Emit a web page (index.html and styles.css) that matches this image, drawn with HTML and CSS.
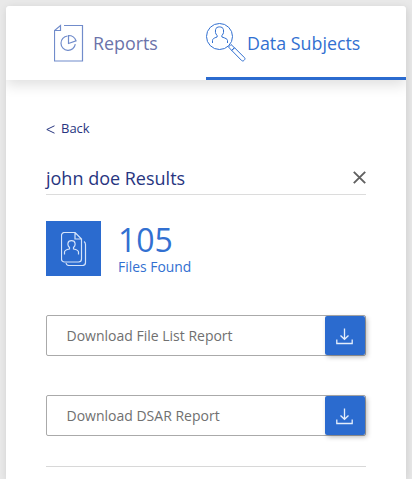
FILE: index.html
```html
<!DOCTYPE html>
<html lang="en">
<head>
<meta charset="utf-8">
<title>Data Subjects</title>
<link rel="stylesheet" href="styles.css">
</head>
<body>
<main class="card">
  <nav class="tabs">
    <a class="tab">
      <svg class="icon-report" width="30" height="38" viewBox="0 0 30 38"><path d="M10 1.500h18.500v35.500H.5V6.500L6.500 1.500v5H.5M13.500 12a7.200 7.200 0 1 0 7.800 8.200M14.500 11.500v8l7.500-2.700c-1-3-3.800-5.300-7.500-5.300z"/></svg>
      <span>Reports</span>
    </a>
    <a class="tab tab-active">
      <svg class="icon-search" width="41" height="41" viewBox="0 0 41 41"><circle cx="13.500" cy="13.500" r="13"/><path d="M6.500 20v-2.500c0-1.500 1-2.300 4.600-3.500v-1.500c-2-2-1.800-4-1.500-6 .4-3.500 7.400-3.500 7.800 0 .3 2 .5 4-1.500 6V14c3.600 1.200 5.600 2 5.600 3.500V20M22.500 24l2.500-2.500 3.500 3.300-2.700 2.700zM25.700 27.400l2.800-2.700 10 10c1 1 .2 2-.5 2.700-.8.800-1.700.7-2.500 0z"/></svg>
      <span>Data Subjects</span>
    </a>
  </nav>
  <section class="content">
    <a class="back"><svg width="9" height="9" viewBox="0 0 9 9"><path d="M8.500.8.8 4.500l7.700 3.700"/></svg><span>Back</span></a>
    <header class="heading">
      <h1>john doe Results</h1>
      <svg width="13" height="13" viewBox="0 0 13 13"><path d="m.8.800 11.400 11.400M12.200.8.8 12.200"/></svg>
    </header>
    <div class="summary">
      <div class="tile">
        <svg width="26" height="34" viewBox="0 0 26 34"><path d="M14 .5H3.500a3 3 0 0 0-3 3V27a3 3 0 0 0 3 3h14a3 3 0 0 0 3-3V7zM14 .5V7h6.500M5 31c.3 1.500 1.300 2.500 3 2.500h13.500a3 3 0 0 0 3-3V12.500c0-1.300-.5-2.300-1.500-3M3.500 22.500V20c0-1.500 1.300-2.300 5-3v-1.500c-2-2-1.800-3-1.500-4.200.4-3.500 6.600-3.500 7 0 .3 1.200.5 2.200-1.500 4.200V17c3.700.7 5 1.500 5 3v2.500"/></svg>
      </div>
      <div class="figures">
        <div class="count">105</div>
        <div class="label">Files Found</div>
      </div>
    </div>
    <div class="download">
      <span>Download File List Report</span>
      <button aria-label="Download"><svg width="17" height="17" viewBox="0 0 17 17"><path d="M8.500.5v10.800M4.500 7.500l4 3.800 4-3.800M.8 11.500v4h15.400v-4"/></svg></button>
    </div>
    <div class="download">
      <span>Download DSAR Report</span>
      <button aria-label="Download"><svg width="17" height="17" viewBox="0 0 17 17"><path d="M8.500.5v10.800M4.500 7.500l4 3.800 4-3.800M.8 11.500v4h15.400v-4"/></svg></button>
    </div>
    <hr>
  </section>
</main>
</body>
</html>
```
FILE: styles.css
```css
* { box-sizing: border-box; }
body {
  margin: 0;
  padding: 6px 6px 0;
  height: 479px;
  background: #e9e9e9;
  font-family: "Open Sans", sans-serif;
}
svg { display: block; fill: none; stroke: currentColor; flex: none; }
.card {
  height: 473px;
  background: #fff;
  border-radius: 3px 3px 0 0;
  box-shadow: 1px 2px 8px rgba(0, 0, 0, .12);
}
.tabs {
  display: flex;
  height: 74px;
  border-radius: 3px 3px 0 0;
  box-shadow: 0 5px 14px rgba(0, 0, 0, .13);
  clip-path: inset(0 0 -30px 0);
}
.tab {
  display: flex;
  align-items: center;
  width: 200px;
  padding-left: 48px;
  color: #6b73aa;
  font-size: 17.850px;
  line-height: 24px;
}
.tab span { margin-left: 9px; }
.tab-active {
  padding: 3px 0 0;
  border-bottom: 3px solid #2b6bcf;
  color: #3270d1;
}
.tab-active span { margin-left: 0; }
.icon-report { color: #718ccb; stroke-width: 1.2; }
.content { padding: 38px 40px 0; }
.back {
  display: flex;
  align-items: center;
  gap: 6px;
  height: 20px;
  color: #27357f;
  font-size: 13px;
  line-height: 20px;
}
.back svg { margin-top: 2px; }
.heading {
  display: flex;
  align-items: center;
  justify-content: space-between;
  height: 34px;
  margin-top: 23px;
  border-bottom: 1px solid #dcdcdc;
  color: #27357f;
}
.heading h1 { margin: 0; font-size: 18px; font-weight: 400; line-height: 24px; }
.heading svg { color: #606060; stroke-width: 1.9; }
.summary { display: flex; gap: 17px; height: 55px; margin: 26px 0 39px; color: #3270d1; }
.tile {
  display: grid;
  place-items: center;
  width: 55px;
  height: 55px;
  background: #2b6bcf;
  color: #d5e4fa;
}
.tile svg { stroke-width: 1.2; }
.count { font-size: 32px; line-height: 38px; }
.label { font-size: 13.900px; line-height: 15px; }
.download {
  display: flex;
  align-items: center;
  justify-content: space-between;
  height: 41px;
  margin-bottom: 39px;
  padding-left: 19.500px;
  border: 1px solid #aaa;
  border-radius: 2px;
  color: #707070;
  font-size: 14px;
}
.download button {
  display: grid;
  place-items: center;
  width: 40px;
  height: 39px;
  padding: 1px 1px 0 0;
  border: 0;
  border-radius: 2px;
  background: #2b6bcf;
  color: #e4eefc;
  box-shadow: 2px 2px 5px rgba(0, 0, 0, .28);
}
.download button svg { stroke-width: 1.3; }
hr { height: 1px; margin: -9px 0 0; border: 0; background: #d8d8d8; }
```
